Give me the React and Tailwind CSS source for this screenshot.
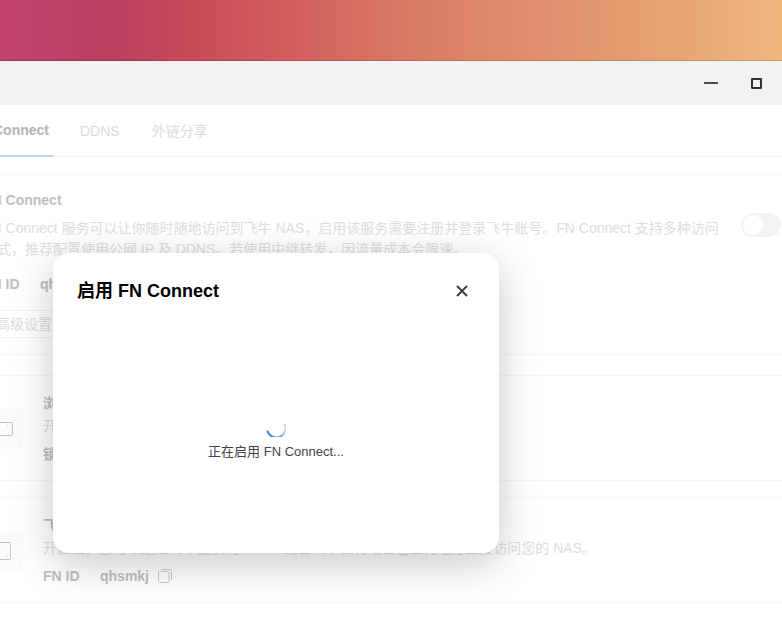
import React from "react";

const font = { fontFamily: '"Liberation Sans","Noto Sans CJK SC",sans-serif' };

function Copy() {
  return (
    <svg width="14" height="14" viewBox="0 0 14 14" fill="none" stroke="#c9c9c9" strokeWidth="1">
      <rect x="0.5" y="2.5" width="10.5" height="11" rx="1" />
      <path d="M3 .5h9.5a1 1 0 0 1 1 1V11" />
    </svg>
  );
}

function IdRow() {
  return (
    <div className="flex items-center h-5 text-[14px] font-bold text-[#bdbdbd]">
      <span className="w-[57px]">FN ID</span>
      <span className="mr-[9px]">qhsmkj</span>
      <Copy />
    </div>
  );
}

function Card({ icon, title, desc, last, className }) {
  return (
    <div className={`border-y border-[#f6f6f6] h-[106px] flex items-start gap-5 pt-[33px] ${className}`}>
      <div className="w-10 h-10 rounded bg-[#fbfbfb] flex items-center justify-center shrink-0">{icon}</div>
      <div className="-mt-[16px] flex flex-col">
        <div className="text-[14px] font-bold text-[#bdbdbd] leading-5 h-5">{title}</div>
        <div className="text-[14px] text-[#dedede] leading-5 mt-[3px] whitespace-nowrap">{desc}</div>
        <div className="mt-2">{last}</div>
      </div>
    </div>
  );
}

export default function App() {
  return (
    <div className="relative w-[782px] h-[641px] overflow-hidden bg-white" style={font}>
      <div className="h-[61px] border-b border-black/15 bg-[linear-gradient(90deg,#c0446f_0%,#b93f60_14%,#c74a57_24%,#d2605f_38%,#d97a64_52%,#df8b6c_66%,#e49c6f_80%,#eeb87d_100%)]" />
      <div className="h-11 bg-[#f1f2f4] flex items-center justify-end">
        <div className="w-[14px] h-[1.5px] bg-[#4a4a4a] mr-[33px]" />
        <div className="w-[11px] h-[11px] border-2 border-[#333] rounded-[1px] mr-5" />
      </div>

      <div className="h-[52px] border-b border-[#f4f4f4] flex items-stretch text-[14px] -ml-[27px]">
        <div className="flex items-center pt-px pr-1 w-[80px] justify-end whitespace-nowrap font-bold text-[#b4b4b4] border-b-2 -mb-px border-[#bcd8f2]">
          FN Connect
        </div>
        <div className="flex items-center pt-px ml-[27px] text-[#dcdcdc]">DDNS</div>
        <div className="flex items-center pt-px ml-8 text-[#dcdcdc]">外链分享</div>
      </div>

      <div className="-ml-[17px] mt-[17px]">
        <div className="relative border-y border-[#f6f6f6] h-[181px] pt-[15px]">
          <div className="text-[14px] font-bold text-[#bdbdbd] leading-5">FN Connect</div>
          <div className="text-[14px] text-[#dedede] leading-[21px] mt-2 w-[740px]">
            FN Connect 服务可以让你随时随地访问到飞牛 NAS，启用该服务需要注册并登录飞牛账号。FN Connect 支持多种访问方式，推荐配置使用公网 IP 及 DDNS。若使用中继转发，因流量成本会限速。
          </div>
          <div className="mt-[14px]"><IdRow /></div>
          <div className="mt-4 w-[120px] h-7 border border-[#f2f2f2] rounded flex items-center pl-[12px] text-[14px] text-[#dedede]">高级设置</div>
          <div className="absolute top-[38px] right-px w-10 h-6 rounded-full bg-[#f3f3f3] p-[2px]">
            <div className="w-5 h-5 rounded-full bg-white" />
          </div>
        </div>

        <Card
          className="mt-5"
          title="浏览器访问"
          desc="开启后，您可以通过浏览器访问您的 NAS。"
          last={<div className="text-[14px] font-bold text-[#bdbdbd] leading-5">锁定</div>}
          icon={
            <svg width="16" height="16" viewBox="0 0 16 16" fill="none" stroke="#c4c4c4" strokeWidth="1" className="ml-[6px]">
              <rect x="0.5" y="1.5" width="14" height="13" rx="1" />
              <path d="M9 4.5h.8M11.5 4.5h.8" />
            </svg>
          }
        />

        <Card
          className="mt-4"
          title="飞牛私有域名"
          desc="开启后，您可以通过飞牛提供的 FN ID 或者飞牛私有域名在任何地方直接访问您的 NAS。"
          last={<IdRow />}
          icon={
            <svg width="16" height="18" viewBox="0 0 16 18" fill="none" stroke="#c4c4c4" strokeWidth="1" className="ml-[2px]">
              <rect x="0.5" y="0.5" width="14" height="17" rx="1" />
              <path d="M10.5 14.5h1" />
            </svg>
          }
        />
      </div>

      <div className="absolute left-[53px] top-[253px] w-[446px] h-[300px] bg-white rounded-2xl shadow-[0_10px_40px_rgba(0,0,0,0.22)] flex flex-col">
        <div className="flex items-center justify-between pl-6 pr-[30px] pt-[26px]">
          <span className="text-[18px] font-bold text-black leading-6">启用 FN Connect</span>
          <svg width="14" height="14" viewBox="0 0 14 14" fill="none" stroke="#3f3f3f" strokeWidth="2">
            <path d="M2 2l10 10M12 2L2 12" />
          </svg>
        </div>
        <div className="flex flex-col items-center mt-[114px]">
          <svg width="20" height="20" viewBox="0 0 20 20" fill="none">
            <defs>
              <linearGradient id="spin" x1="0" y1="0" x2="1" y2="0">
                <stop offset="0" stopColor="#2f7ae5" />
                <stop offset="0.6" stopColor="#4a8fe8" />
                <stop offset="1" stopColor="#c5daf5" />
              </linearGradient>
            </defs>
            <path d="M1.6 14.5A9 9 0 0 0 19 8" stroke="url(#spin)" strokeWidth="2" strokeLinecap="round" />
          </svg>
          <div className="text-[13px] text-[#444] leading-5 mt-[5px]">正在启用 FN Connect...</div>
        </div>
      </div>
    </div>
  );
}
